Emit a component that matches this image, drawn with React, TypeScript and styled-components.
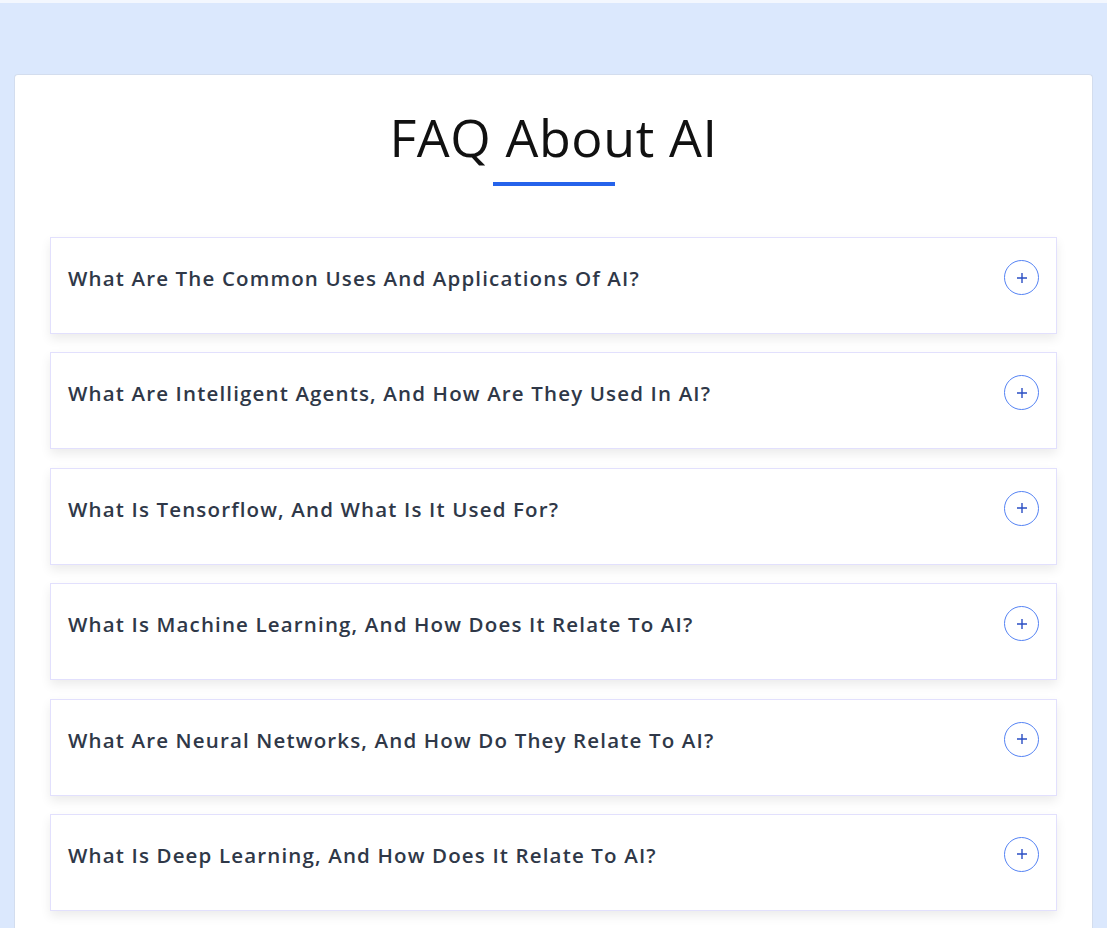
import React from "react";
import styled, { createGlobalStyle } from "styled-components";

const Global = createGlobalStyle`
  html, body { margin: 0; padding: 0; }
  body {
    background: #dbe8fd;
    font-family: "Open Sans", "Noto Sans", sans-serif;
    border-top: 3px solid #f3f7fe;
  }
`;

const Page = styled.div`
  padding: 71px 14px 0 14px;
`;

const Card = styled.section`
  background: #ffffff;
  border: 1px solid #d3ddee;
  border-bottom: none;
  border-radius: 4px 4px 0 0;
  padding: 30px 35px 0 35px;
  min-height: 860px;
  box-sizing: border-box;
`;

const Title = styled.h1`
  margin: 0;
  text-align: center;
  font-family: "Open Sans", sans-serif;
  font-weight: 400;
  font-size: 52px;
  line-height: 64px;
  color: #111111;
  letter-spacing: 0.6px;
`;

const Underline = styled.div`
  width: 122px;
  height: 4px;
  background: #2563eb;
  margin: 13px auto 51px;
`;

const List = styled.div`
  display: flex;
  flex-direction: column;
  gap: 18.4px;
`;

const Item = styled.div`
  border: 1px solid #e2e0fd;
  background: #fff;
  box-shadow: 0 5px 10px rgba(0, 0, 0, 0.08);
  display: flex;
  align-items: flex-start;
  justify-content: space-between;
  padding: 25px 17px 0 17px;
  height: 97px;
  box-sizing: border-box;
`;

const Question = styled.h3`
  margin: 0;
  font-family: "Open Sans", sans-serif;
  font-weight: 600;
  font-size: 20.5px;
  line-height: 30px;
  color: #2f3848;
  letter-spacing: 1.15px;
`;

const Toggle = styled.button`
  width: 35px;
  height: 35px;
  border-radius: 50%;
  border: 1.5px solid #5583f4;
  background: transparent;
  display: flex;
  align-items: center;
  justify-content: center;
  padding: 0;
  margin-top: -3px;
  color: #2b4fc4;
  cursor: pointer;
`;

const questions = [
  "What Are The Common Uses And Applications Of AI?",
  "What Are Intelligent Agents, And How Are They Used In AI?",
  "What Is Tensorflow, And What Is It Used For?",
  "What Is Machine Learning, And How Does It Relate To AI?",
  "What Are Neural Networks, And How Do They Relate To AI?",
  "What Is Deep Learning, And How Does It Relate To AI?",
];

export default function App() {
  return (
    <>
      <Global />
      <Page>
        <Card>
          <Title>FAQ About AI</Title>
          <Underline />
          <List>
            {questions.map((q) => (
              <Item key={q}>
                <Question>{q}</Question>
                <Toggle aria-label="expand">
                  <svg width="12" height="12" viewBox="0 0 12 12">
                    <path d="M6 1v10M1 6h10" stroke="currentColor" strokeWidth="1.4" />
                  </svg>
                </Toggle>
              </Item>
            ))}
          </List>
        </Card>
      </Page>
    </>
  );
}
